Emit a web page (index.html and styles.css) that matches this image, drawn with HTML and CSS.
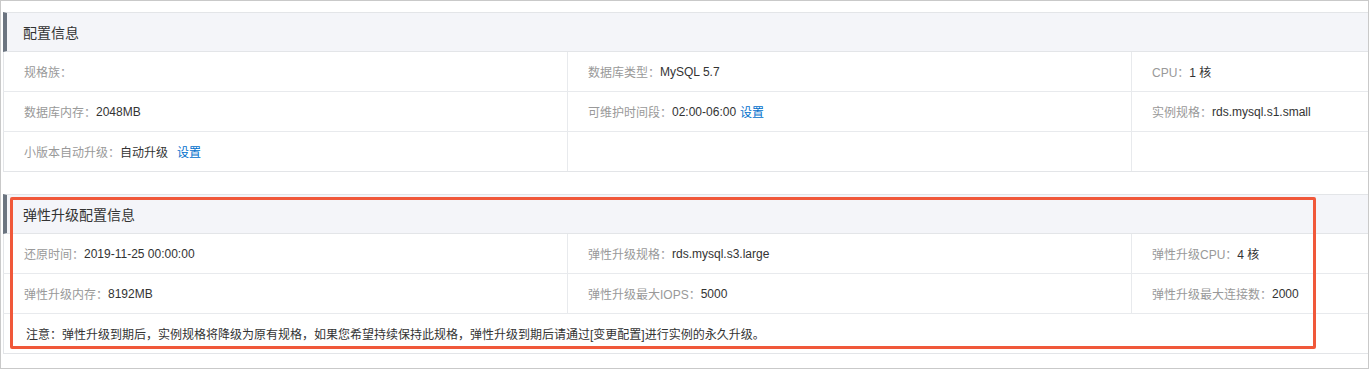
FILE: index.html
```html
<!DOCTYPE html>
<html lang="zh-CN">

<head>
    <meta charset="UTF-8">
    <meta name="viewport" content="width=device-width, initial-scale=1.0">
    <title>配置信息</title>

    <link rel="stylesheet" href="styles.css">
</head>

<body>
    <div class="frame">

        <div class="section">
            <div class="section-title">配置信息</div>

            <div class="info-row">
                <div class="cell"><span class="label">规格族：</span></div>
                <div class="cell"><span class="label">数据库类型：</span><span class="value">MySQL 5.7</span></div>
                <div class="cell"><span class="label">CPU：</span><span class="value">1 核</span></div>
            </div>
            <div class="info-row">
                <div class="cell"><span class="label">数据库内存：</span><span class="value">2048MB</span></div>
                <div class="cell"><span class="label">可维护时间段：</span><span class="value">02:00-06:00</span><a class="link" href="#">设置</a></div>
                <div class="cell"><span class="label">实例规格：</span><span class="value">rds.mysql.s1.small</span></div>
            </div>
            <div class="info-row">
                <div class="cell"><span class="label">小版本自动升级：</span><span class="value">自动升级</span><a class="link wide" href="#">设置</a></div>
                <div class="cell"></div>
                <div class="cell"></div>
            </div>
        </div>

        <div class="section elastic">
            <div class="section-title">弹性升级配置信息</div>

            <div class="info-row">
                <div class="cell"><span class="label">还原时间：</span><span class="value">2019-11-25 00:00:00</span></div>
                <div class="cell"><span class="label">弹性升级规格：</span><span class="value">rds.mysql.s3.large</span></div>
                <div class="cell"><span class="label">弹性升级CPU：</span><span class="value">4 核</span></div>
            </div>
            <div class="info-row">
                <div class="cell"><span class="label">弹性升级内存：</span><span class="value">8192MB</span></div>
                <div class="cell"><span class="label">弹性升级最大IOPS：</span><span class="value">5000</span></div>
                <div class="cell"><span class="label">弹性升级最大连接数：</span><span class="value">2000</span></div>
            </div>
            <div class="note-row">注意：弹性升级到期后，实例规格将降级为原有规格，如果您希望持续保持此规格，弹性升级到期后请通过[变更配置]进行实例的永久升级。</div>

            <!-- highlight box drawn over the section -->
            <div class="highlight"></div>
        </div>

    </div>
</body>

</html>
```

FILE: styles.css
```css
body {
    margin: 0;
    font-family: "Liberation Sans", "Noto Sans CJK SC", sans-serif;
    font-size: 12px;
    color: #333;
    background-color: #fff;
}

.frame {
    box-sizing: border-box;
    height: 369px;
    border: 1px solid #c9c9c9;
    padding: 11px 0 0 2px;
}

.section {
    border-bottom: 1px solid #e3e5e8;
}

.elastic {
    position: relative;
    margin-top: 22px;
}

.section-title {
    height: 38px;
    display: flex;
    align-items: center;
    padding-left: 16px;
    background-color: #f4f5f9;
    border-top: 1px solid #e3e5e8;
    border-bottom: 1px solid #e3e5e8;
    border-left: 4px solid #6b7480;
    font-size: 14px;
    color: #333;
}

.info-row {
    display: grid;
    grid-template-columns: 564px 564px 1fr;
    height: 39px;
    border-left: 1px solid #e3e5e8;
    border-bottom: 1px solid #e8eaed;
}

.section .info-row:last-child {
    border-bottom: none;
}

.cell {
    display: flex;
    align-items: center;
    padding-left: 20px;
    border-right: 1px solid #e8eaed;
    white-space: nowrap;
}

.cell:last-child {
    border-right: none;
}

.label {
    color: #999;
}

.value {
    color: #333;
}

.link {
    color: #0070cc;
    text-decoration: none;
    margin-left: 4px;
}

.link.wide {
    margin-left: 9px;
}

.note-row {
    height: 39px;
    display: flex;
    align-items: center;
    padding-left: 22px;
    border-left: 1px solid #e3e5e8;
    color: #333;
}

.highlight {
    position: absolute;
    left: 7px;
    top: 3px;
    width: 1306px;
    height: 152px;
    box-sizing: border-box;
    border: 3px solid #f0583a;
    border-radius: 2px;
    pointer-events: none;
}
```
